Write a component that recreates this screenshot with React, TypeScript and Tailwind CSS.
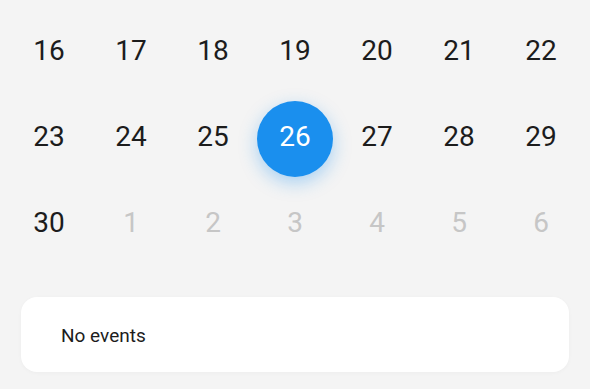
const rows: { d: number; muted?: boolean; active?: boolean }[][] = [
  [16, 17, 18, 19, 20, 21, 22].map((d) => ({ d })),
  [23, 24, 25, 26, 27, 28, 29].map((d) => ({ d, active: d === 26 })),
  [{ d: 30 }, ...[1, 2, 3, 4, 5, 6].map((d) => ({ d, muted: true }))],
]

function Day({ d, muted, active }: { d: number; muted?: boolean; active?: boolean }) {
  if (active) {
    return (
      <div className="flex h-[86px] items-center justify-center">
        <div className="flex h-[76px] w-[76px] translate-y-[2px] items-center justify-center rounded-full bg-[#1a8fee] text-white shadow-[0_6px_18px_rgba(26,143,240,0.35)]">
          <span className="-translate-y-[2px]">{d}</span>
        </div>
      </div>
    )
  }
  return (
    <div
      className={
        "flex h-[86px] items-center justify-center " +
        (muted ? "text-[#c6c6c6]" : "text-[#1c1c1c]")
      }
    >
      {d}
    </div>
  )
}

export default function App() {
  return (
    <div className="h-[389px] w-[590px] overflow-hidden bg-[#f4f4f4] font-['Roboto',sans-serif]">
      <div className="grid grid-cols-[repeat(7,82px)] px-2 pt-2 text-[28px] leading-none">
        {rows.flat().map((c, i) => (
          <Day key={i} {...c} />
        ))}
      </div>
      <div className="mx-[21px] mt-[31px] flex h-[75px] items-center rounded-2xl bg-white pl-10 pt-[3px] text-[19px] text-[#1c1c1c] shadow-[0_1px_4px_rgba(0,0,0,0.03)]">
        No events
      </div>
    </div>
  )
}
